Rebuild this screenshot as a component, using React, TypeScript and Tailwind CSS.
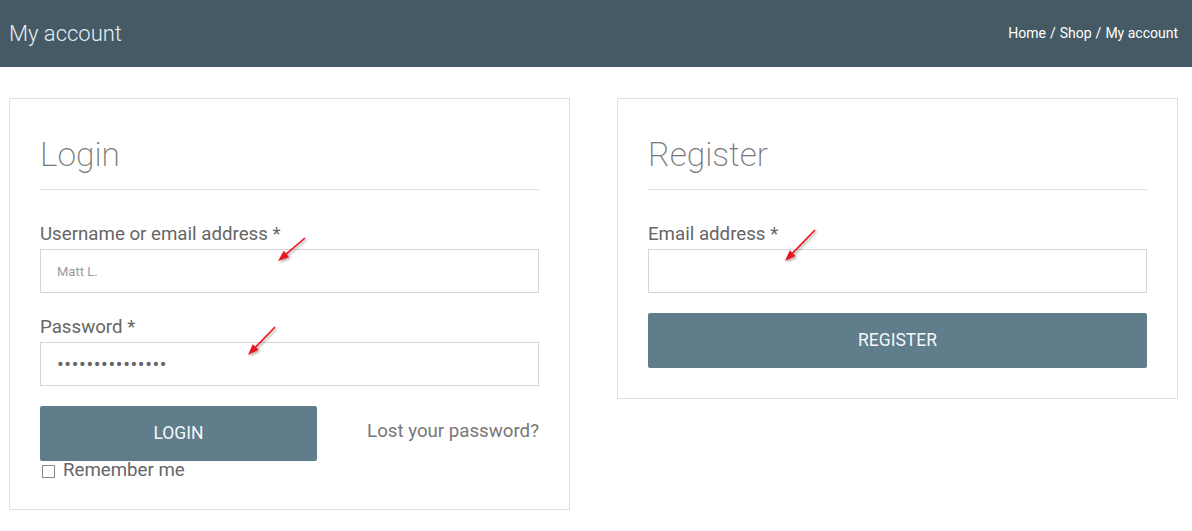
import { useState } from 'react';

const font = { fontFamily: 'Roboto, "Liberation Sans", sans-serif' };

function Field(props: { label: string; children: React.ReactNode; className?: string }) {
  return (
    <div className={props.className}>
      <label className="block text-[18.7px] leading-[24px] text-[#666] h-[27px]">{props.label}</label>
      {props.children}
    </div>
  );
}

function Heading({ children }: { children: React.ReactNode }) {
  return (
    <div className="border-b border-[#e2e2e2] pb-[14px]">
      <h2 className="text-[33.5px] leading-[41px] pt-[3px] font-extralight text-[#777]">{children}</h2>
    </div>
  );
}

export default function App() {
  const [remember, setRemember] = useState(false);

  return (
    <div className="relative min-h-[531px] bg-white" style={font}>
      <header className="flex h-[67px] items-center justify-between bg-[#455a64] pl-[9px] pr-[14px]">
        <h1 className="text-[22px] font-light text-[#e3f0f6]">My account</h1>
        <nav className="flex items-center gap-[4px] text-[14px] text-white">
          <span>Home</span>
          <span>/</span>
          <span>Shop</span>
          <span>/</span>
          <span>My account</span>
        </nav>
      </header>

      <main className="grid grid-cols-2 items-start gap-[47px] pl-[9px] pr-[14px] pt-[31px]">
        <section className="border border-[#e0e0e0] px-[30px] pt-[32px] pb-[30px]">
          <Heading>Login</Heading>
          <Field label="Username or email address *" className="mt-[32px]">
            <input
              className="block h-[44px] w-full border border-[#d6d6d6] px-[16px] text-[13px] text-[#666] placeholder:text-[#9a9a9a] outline-none"
              placeholder="Matt L."
            />
          </Field>
          <Field label="Password *" className="mt-[22px]">
            <input
              type="password"
              readOnly
              defaultValue="passwordpasswor"
              className="block h-[44px] w-full border border-[#d6d6d6] px-[16px] text-[20px] tracking-[0.6px] text-[#666] outline-none"
            />
          </Field>
          <div className="mt-[20px] flex items-start justify-between">
            <button className="h-[55px] w-[277px] rounded-[2px] bg-[#607d8b] text-[17.5px] text-[#f4f8fa]">
              LOGIN
            </button>
            <a className="mt-[13px] text-[18.7px] leading-[24px] text-[#777]">Lost your password?</a>
          </div>
          <label className="flex h-[18px] items-center gap-[8px] text-[18.7px] leading-[18px] text-[#666]">
            <span
              onClick={() => setRemember(!remember)}
              className="ml-[2px] mt-[2px] inline-block h-[13px] w-[13px] border border-[#8a8a8a] bg-white"
            />
            Remember me
          </label>
        </section>

        <section className="border border-[#e0e0e0] px-[30px] pt-[32px] pb-[30px]">
          <Heading>Register</Heading>
          <Field label="Email address *" className="mt-[32px]">
            <input className="block h-[44px] w-full border border-[#d6d6d6] px-[16px] text-[13px] outline-none" />
          </Field>
          <button className="mt-[20px] h-[55px] w-full rounded-[2px] bg-[#607d8b] text-[17.5px] text-[#f4f8fa]">
            REGISTER
          </button>
        </section>
      </main>

      {/* annotation arrows drawn over the form */}
      <svg className="pointer-events-none absolute left-0 top-0" width="1192" height="531">
        <defs>
          <filter id="sh" x="-50%" y="-50%" width="200%" height="200%">
            <feDropShadow dx="1.5" dy="1.5" stdDeviation="1" floodColor="#000" floodOpacity="0.35" />
          </filter>
        </defs>
        {[
          [305, 238, 278, 261],
          [275, 327, 248, 355],
          [815, 230, 785, 261],
        ].map(([x1, y1, x2, y2], i) => {
          const a = Math.atan2(y2 - y1, x2 - x1);
          const l = 11;
          const w = 4;
          const bx = x2 - l * Math.cos(a);
          const by = y2 - l * Math.sin(a);
          const px = -Math.sin(a) * w;
          const py = Math.cos(a) * w;
          return (
            <g key={i} filter="url(#sh)">
              <line x1={x1} y1={y1} x2={bx} y2={by} stroke="#e8141b" strokeWidth="1.6" />
              <polygon
                points={`${x2},${y2} ${bx + px},${by + py} ${bx - px},${by - py}`}
                fill="#e8141b"
              />
            </g>
          );
        })}
      </svg>
    </div>
  );
}
